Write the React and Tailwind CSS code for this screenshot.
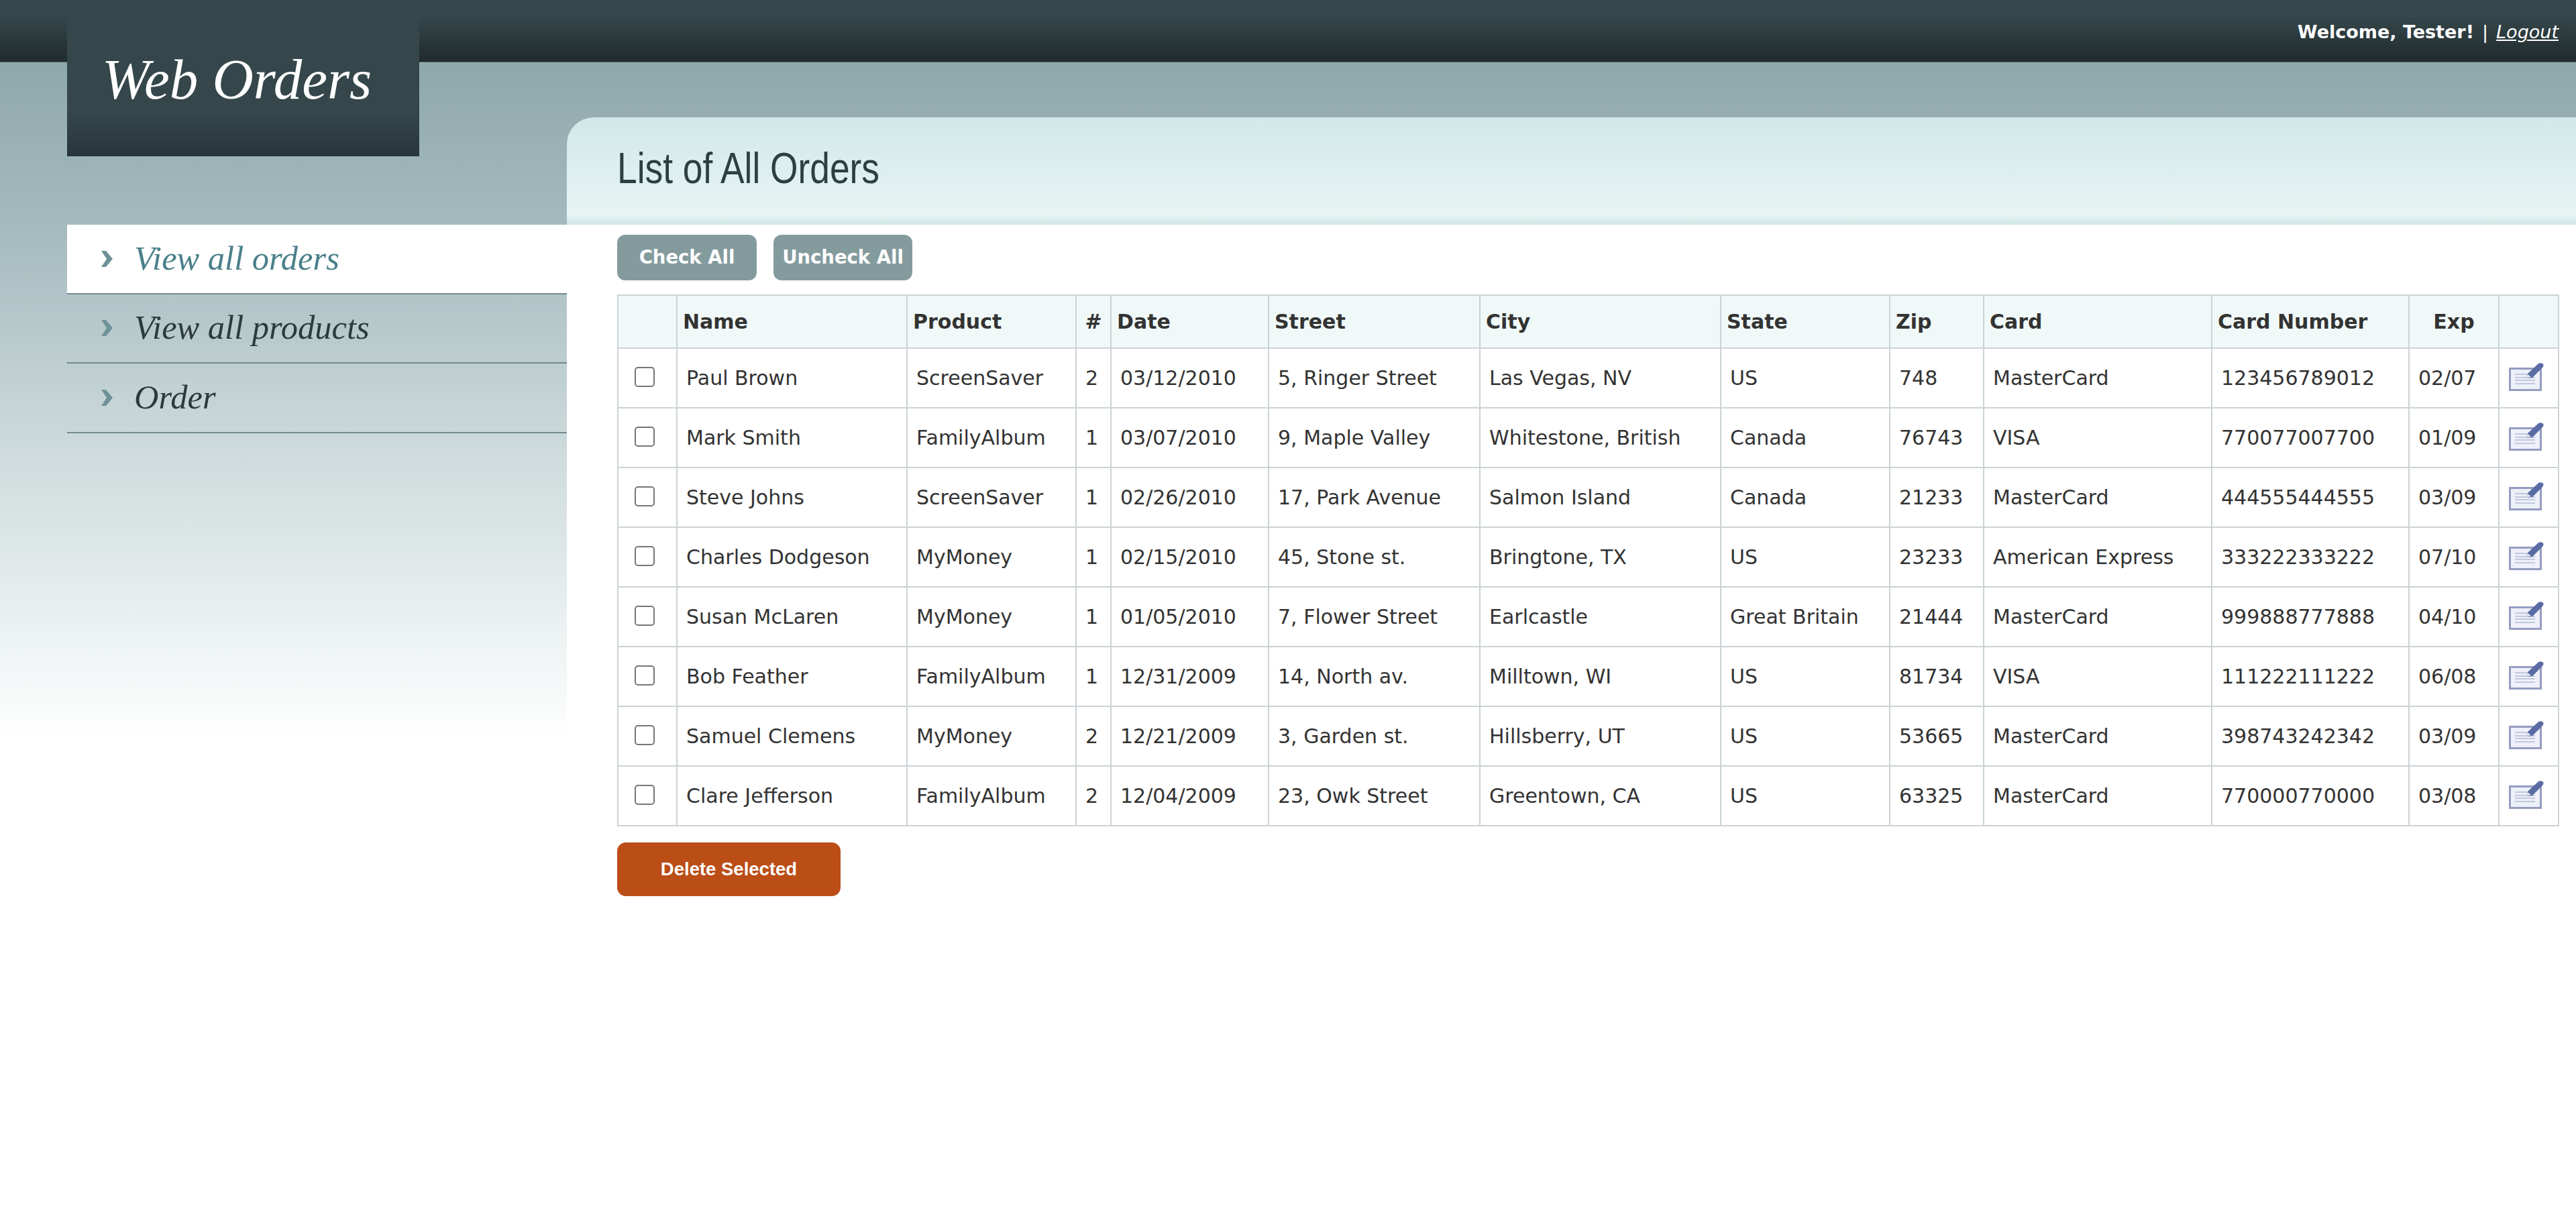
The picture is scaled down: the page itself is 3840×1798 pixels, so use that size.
import { useState } from "react";

const orders = [
  ["Paul Brown", "ScreenSaver", "2", "03/12/2010", "5, Ringer Street", "Las Vegas, NV", "US", "748", "MasterCard", "123456789012", "02/07"],
  ["Mark Smith", "FamilyAlbum", "1", "03/07/2010", "9, Maple Valley", "Whitestone, British", "Canada", "76743", "VISA", "770077007700", "01/09"],
  ["Steve Johns", "ScreenSaver", "1", "02/26/2010", "17, Park Avenue", "Salmon Island", "Canada", "21233", "MasterCard", "444555444555", "03/09"],
  ["Charles Dodgeson", "MyMoney", "1", "02/15/2010", "45, Stone st.", "Bringtone, TX", "US", "23233", "American Express", "333222333222", "07/10"],
  ["Susan McLaren", "MyMoney", "1", "01/05/2010", "7, Flower Street", "Earlcastle", "Great Britain", "21444", "MasterCard", "999888777888", "04/10"],
  ["Bob Feather", "FamilyAlbum", "1", "12/31/2009", "14, North av.", "Milltown, WI", "US", "81734", "VISA", "111222111222", "06/08"],
  ["Samuel Clemens", "MyMoney", "2", "12/21/2009", "3, Garden st.", "Hillsberry, UT", "US", "53665", "MasterCard", "398743242342", "03/09"],
  ["Clare Jefferson", "FamilyAlbum", "2", "12/04/2009", "23, Owk Street", "Greentown, CA", "US", "63325", "MasterCard", "770000770000", "03/08"],
];

const columns = [
  { title: "", width: "w-[88px]" },
  { title: "Name", width: "w-[343px]" },
  { title: "Product", width: "w-[252px]" },
  { title: "#", width: "w-[52px]", center: true },
  { title: "Date", width: "w-[235px]" },
  { title: "Street", width: "w-[315px]" },
  { title: "City", width: "w-[359px]" },
  { title: "State", width: "w-[252px]" },
  { title: "Zip", width: "w-[140px]" },
  { title: "Card", width: "w-[340px]" },
  { title: "Card Number", width: "w-[294px]" },
  { title: "Exp", width: "w-[134px]", center: true },
  { title: "", width: "w-[89px]" },
];

const menu = ["View all orders", "View all products", "Order"];

function Chevron() {
  return (
    <svg width="19" height="24" viewBox="0 0 19 24" className="shrink-0">
      <path d="M1 0h7l10 12-10 12H1l8-12z" fill="#6f9298" />
    </svg>
  );
}

function EditIcon() {
  return (
    <svg width="52" height="42" viewBox="0 0 52 42" className="block -mt-[3px]">
      <rect x="1.5" y="8.5" width="46" height="32" fill="#eef0fa" stroke="#959cc0" strokeWidth="3" />
      <path d="M9 17h18M9 22h30M9 26h30M9 31h30" stroke="#c3c8dc" strokeWidth="2" />
      <path d="M26 23l2-7 15-14c2-2 5-2 7-1s2 4 0 6L35 22z" fill="#5a6ca3" />
      <path d="M26 23l2-6 5 4z" fill="#dfe3f2" />
    </svg>
  );
}

export default function App() {
  const [checked, setChecked] = useState({});

  return (
    <div className="min-h-[1798px] bg-white font-['DejaVu_Sans',sans-serif] text-[#333333]">
      <div className="relative">
        {/* top bar */}
        <div className="h-[93px] bg-[linear-gradient(to_bottom,#35474b_25%,#212c2e_96%)] border-b border-[#56686b] flex justify-end items-start pt-[30px] pr-[26px] text-[27px] leading-[36px] text-white">
          <span className="font-bold">Welcome, Tester!</span>
          <span className="mx-[12px]">|</span>
          <a href="#" className="italic underline">Logout</a>
        </div>
        <div className="absolute left-[100px] top-0 w-[525px] h-[233px] bg-[linear-gradient(to_bottom,#35474b_0%,#35474b_72%,#27353a_100%)] pt-[70px] pl-[52px]">
          <h1 className="font-['Liberation_Serif',serif] italic text-[85px] leading-[96px] text-white">Web Orders</h1>
        </div>
      </div>

      <div className="flex min-h-[1705px] bg-[linear-gradient(to_bottom,#8fa8ac_0%,#a4babd_24%,#cbd8da_55%,#f3f7f7_90%,#ffffff_100%)] bg-no-repeat bg-[length:100%_1010px]">
        <nav className="w-[845px] shrink-0 pt-[242px] pl-[100px]">
          {menu.map((item, i) => (
            <div
              key={item}
              className={`h-[103.5px] flex items-center gap-[31px] pl-[50px] border-b-2 border-[#728a8c] font-['Liberation_Serif',serif] italic text-[50.5px] ${
                i === 0 ? "bg-white text-[#4a8089]" : "text-[#2b3a3d]"
              }`}
            >
              <Chevron />
              {item}
            </div>
          ))}
        </nav>

        <main className="flex-1 flex flex-col mt-[82px]">
          <div className="h-[160px] rounded-tl-[40px] bg-[linear-gradient(to_bottom,#d1e8e9_0%,#e8f4f4_90%,#d2e6e6_100%)] pl-[75px] pt-[38px]">
            <h2 className="inline-block origin-left scale-x-[0.82] font-['Liberation_Sans',sans-serif] text-[65px] leading-[76px] text-[#2c3f42]">List of All Orders</h2>
          </div>

          <div className="flex-1 bg-white pl-[75px] pr-[26px]">
            <div className="flex gap-[25px] pt-[15px] pb-[21px]">
              <button className="w-[208px] h-[68px] rounded-[12px] bg-[#849b9e] text-white font-bold text-[27.5px]">Check All</button>
              <button className="w-[207px] h-[68px] rounded-[12px] bg-[#849b9e] text-white font-bold text-[27.5px]">Uncheck All</button>
            </div>

            <table className="table-fixed border-collapse w-[2893px] text-[30px]">
              <thead>
                <tr className="h-[79px] bg-[#f0f9f8]">
                  {columns.map((col, i) => (
                    <th
                      key={i}
                      className={`${col.width} border-2 border-[#cbd3d6] px-[8px] font-bold ${col.center ? "text-center" : "text-left"}`}
                    >
                      {col.title}
                    </th>
                  ))}
                </tr>
              </thead>
              <tbody>
                {orders.map((row, r) => (
                  <tr key={r} className="h-[89px]">
                    <td className="border-2 border-[#cbd3d6] pl-[24px]">
                      <input
                        type="checkbox"
                        className="appearance-none block -mt-[3px] w-[30px] h-[30px] rounded-[5px] border-2 border-[#767676] bg-white"
                        checked={!!checked[r]}
                        onChange={() => setChecked({ ...checked, [r]: !checked[r] })}
                      />
                    </td>
                    {row.map((cell, c) => (
                      <td key={c} className="border-2 border-[#cbd3d6] px-[13px] whitespace-nowrap">{cell}</td>
                    ))}
                    <td className="border-2 border-[#cbd3d6] pl-[14px]"><EditIcon /></td>
                  </tr>
                ))}
              </tbody>
            </table>

            <button className="mt-[24px] w-[333px] h-[80px] rounded-[13px] bg-[#bb4d17] text-white font-['Liberation_Sans',sans-serif] font-bold text-[27.5px]">Delete Selected</button>
          </div>
        </main>
      </div>
    </div>
  );
}
